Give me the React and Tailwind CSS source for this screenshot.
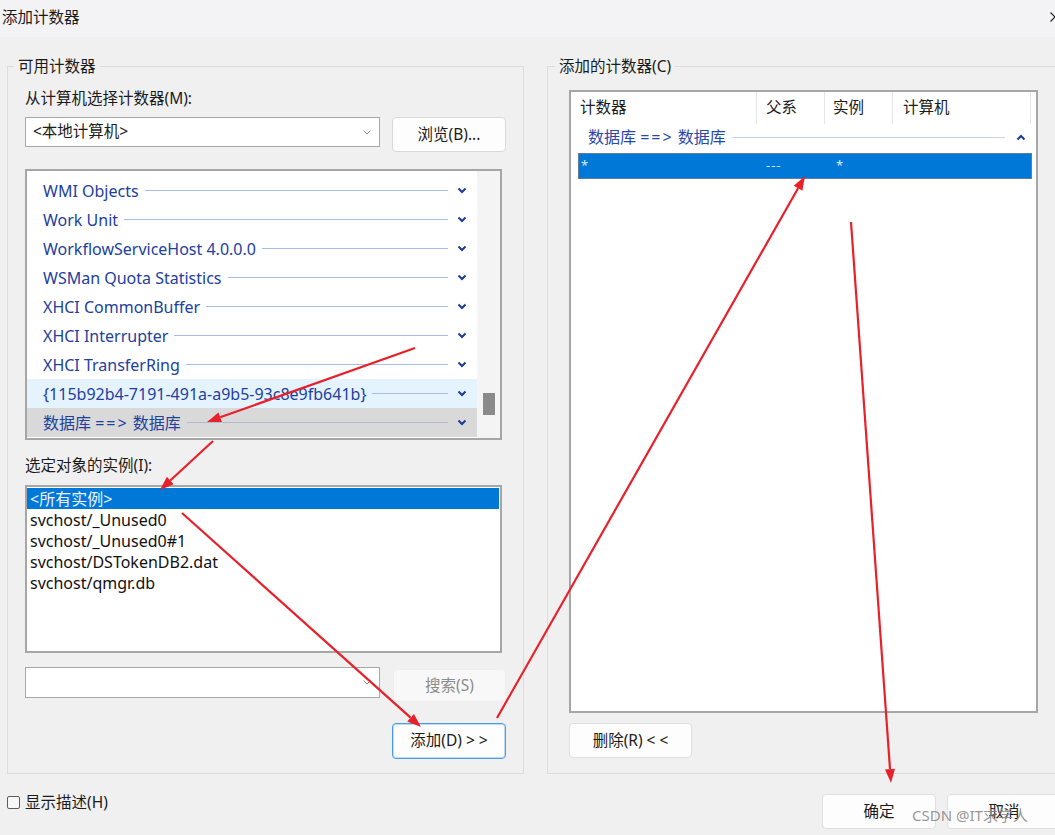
import React from 'react';

const counters = [
  'WMI Objects',
  'Work Unit',
  'WorkflowServiceHost 4.0.0.0',
  'WSMan Quota Statistics',
  'XHCI CommonBuffer',
  'XHCI Interrupter',
  'XHCI TransferRing',
  '{115b92b4-7191-491a-a9b5-93c8e9fb641b}',
  null,
];

const instances = ['<所有实例>', 'svchost/_Unused0', 'svchost/_Unused0#1', 'svchost/DSTokenDB2.dat', 'svchost/qmgr.db'];

// red annotation arrows: [x1, y1, tipX, tipY]
const arrows = [
  [415, 348, 207, 422],
  [213, 441, 160, 490],
  [182, 513, 421, 727],
  [497, 718, 805, 176],
  [851, 222, 891, 783],
];

const Chevron = ({ up }) => (
  <svg width="10" height="7" viewBox="0 0 10 7" className="shrink-0">
    <path d={up ? 'M1.5 5.5 L5 2 L8.5 5.5' : 'M1.5 1.5 L5 5 L8.5 1.5'} fill="none" stroke="#1c3a96" strokeWidth="2" />
  </svg>
);

const ComboArrow = () => (
  <svg width="8" height="5" viewBox="0 0 8 5" className="shrink-0">
    <path d="M0.5 0.5 L4 4 L7.5 0.5" fill="none" stroke="#8a8a8a" strokeWidth="1" />
  </svg>
);

const DbLabel = () => (
  <>
    数据库 <span className="tracking-[2px]">==&gt;</span> 数据库
  </>
);

const Button = ({ children, className = '' }) => (
  <button className={`flex items-center justify-center rounded-[4px] border text-[15.5px] ${className}`}>{children}</button>
);

const Arrow = ({ a }) => {
  const [x1, y1, x2, y2] = a;
  const len = Math.hypot(x2 - x1, y2 - y1);
  const ux = (x2 - x1) / len;
  const uy = (y2 - y1) / len;
  const bx = x2 - ux * 14;
  const by = y2 - uy * 14;
  const pts = `${x2},${y2} ${bx - uy * 5},${by + ux * 5} ${bx + uy * 5},${by - ux * 5}`;
  return (
    <g>
      <line x1={x1} y1={y1} x2={bx} y2={by} stroke="#e8202a" strokeWidth="2.2" />
      <polygon points={pts} fill="#e8202a" />
    </g>
  );
};

const CounterRow = ({ name, index }) => {
  const hover = index === 7;
  const selected = index === 8;
  return (
    <div
      className={`flex h-[29px] items-center pl-4 pr-[10px] ${hover ? 'bg-[#e5f3ff]' : ''} ${selected ? 'bg-[#d9d9d9]' : ''}`}
    >
      <span className="whitespace-nowrap text-[#2140a0]">{name ?? <DbLabel />}</span>
      <div className={`ml-[6px] mr-[9px] h-px flex-1 ${selected ? 'bg-[#b3bacb]' : 'bg-[#a9bde2]'}`} />
      <Chevron />
    </div>
  );
};

export default function App() {
  return (
    <div className="relative h-[835px] w-[1055px] overflow-hidden bg-[#f0f0f0] font-['Noto_Sans','Noto_Sans_CJK_SC',sans-serif] text-[15.5px] text-[#1b1b1b]">
      {/* title bar */}
      <div className="flex h-[37px] items-start justify-between bg-[#f3f3f5]">
        <span className="pl-[2px] pt-[7px] leading-5">添加计数器</span>
        <svg width="10" height="10" viewBox="0 0 10 10" className="mt-[12px] -mr-[5px]">
          <path d="M0.5 0.5 L9.5 9.5 M9.5 0.5 L0.5 9.5" stroke="#222" strokeWidth="1.2" />
        </svg>
      </div>

      <div className="mt-[19px] flex gap-[23px] pl-[7px]">
        {/* left group */}
        <fieldset className="w-[517px] shrink-0 border border-[#dcdcdc]">
          <legend className="ml-[6px] px-[4px] leading-[20px]">可用计数器</legend>
          <div className="px-[17px] pb-[14px]">
            <div className="mt-[12px] leading-5">从计算机选择计数器(M):</div>
            <div className="mt-[9px] flex items-start justify-between">
              <div className="flex h-[30px] w-[355px] items-center justify-between border border-[#a8a8a8] bg-white pl-[7px] pr-[8px]">
                <span>&lt;本地计算机&gt;</span>
                <ComboArrow />
              </div>
              <Button className="h-[35px] w-[114px] border-[#d9d9d9] bg-[#fdfdfd]">浏览(B)...</Button>
            </div>

            <div className="mt-[17px] flex h-[271px] w-[477px] border-2 border-[#a6a6a6] bg-white text-[16px]">
              <div className="flex-1 pt-[5px]">
                {counters.map((c, i) => (
                  <CounterRow key={i} name={c} index={i} />
                ))}
              </div>
              <div className="w-[23px] bg-[#f4f4f4] pl-[6px] pt-[222px]">
                <div className="h-[22px] w-[12px] bg-[#8a8a8a]" />
              </div>
            </div>

            <div className="mt-[15px] leading-5">选定对象的实例(I):</div>
            <div className="mt-[10px] h-[168px] w-[477px] border-2 border-[#a6a6a6] bg-white pt-px text-[16px]">
              {instances.map((t, i) => (
                <div
                  key={t}
                  className={`flex h-[21px] items-center pl-[3px] ${i === 0 ? 'mr-px bg-[#0078d7] text-[#eaf2fb]' : 'text-[#111]'}`}
                >
                  {t}
                </div>
              ))}
            </div>

            <div className="mt-[14px] flex items-start justify-between">
              <div className="flex h-[31px] w-[355px] items-center justify-end border border-[#a8a8a8] bg-white pr-[8px]">
                <ComboArrow />
              </div>
              <Button className="mt-[2px] h-[33px] w-[113px] border-[#eeeeee] bg-[#f8f8f8] text-[#8c8c8c]">搜索(S)</Button>
            </div>

            <div className="mt-[21px] flex justify-end">
              <Button className="h-[36px] w-[114px] border-[#4a9be6] bg-[#fdfdfd] shadow-[inset_0_0_0_1px_#bcdcf7]">添加(D) &gt; &gt;</Button>
            </div>
          </div>
        </fieldset>

        {/* right group */}
        <fieldset className="flex w-[530px] shrink-0 flex-col border border-[#dcdcdc]">
          <legend className="ml-[7px] px-[4px] leading-[20px]">添加的计数器(C)</legend>
          <div className="px-[21px] pb-[15px]">
            <div className="mt-[14px] h-[623px] w-[469px] border-2 border-[#a6a6a6] bg-white">
              <div className="flex h-[32px]">
                <div className="flex w-[186px] items-center border-r border-[#e5e5e5] pl-[9px]">计数器</div>
                <div className="flex w-[68px] items-center border-r border-[#e5e5e5] pl-[9px]">父系</div>
                <div className="flex w-[68px] items-center border-r border-[#e5e5e5] pl-[8px]">实例</div>
                <div className="flex w-[138px] items-center border-r border-[#e5e5e5] pl-[10px]">计算机</div>
              </div>
              <div className="flex h-[26px] items-center pl-[17px] pr-[10px] text-[16px]">
                <span className="whitespace-nowrap text-[#2a48a8]">
                  <DbLabel />
                </span>
                <div className="ml-[6px] mr-[11px] h-px flex-1 bg-[#c8d4ea]" />
                <Chevron up />
              </div>
              <div className="ml-[7px] mr-[4px] mt-[3px] flex h-[26px] items-center border border-[#5f7d9e] bg-[#0078d7] text-[13px] text-[#dbe8f7]">
                <span className="w-[178px] pl-[2px]">*</span>
                <span className="w-[68px] pl-[9px] tracking-[1px]">---</span>
                <span className="pl-[11px]">*</span>
              </div>
            </div>
            <Button className="mt-[10px] h-[35px] w-[123px] border-[#e0e0e0] bg-[#fdfdfd]">删除(R) &lt; &lt;</Button>
          </div>
        </fieldset>
      </div>

      {/* bottom row */}
      <div className="mt-[20px] flex items-start px-[7px]">
        <div className="-mt-[2px] flex items-center gap-[5px] leading-5">
          <div className="h-[13px] w-[13px] rounded-[2px] border border-[#5c5c5c] bg-[#f7f7f7]" />
          <span>显示描述(H)</span>
        </div>
        <div className="flex-1" />
        <div className="-mr-[13px] flex gap-[11px]">
          <Button className="h-[35px] w-[114px] border-[#e0e0e0] bg-[#fdfdfd]">确定</Button>
          <Button className="h-[35px] w-[114px] border-[#e0e0e0] bg-[#fdfdfd]">取消</Button>
        </div>
      </div>

      {/* watermark */}
      <div className="pointer-events-none absolute left-[912px] top-[805px] whitespace-nowrap text-[15px] leading-5 text-[#8a8a8a]/90">
        CSDN @IT求学人
      </div>

      {/* annotation arrows */}
      <svg className="pointer-events-none absolute left-0 top-0" width="1055" height="835">
        {arrows.map((a, i) => (
          <Arrow key={i} a={a} />
        ))}
      </svg>
    </div>
  );
}
